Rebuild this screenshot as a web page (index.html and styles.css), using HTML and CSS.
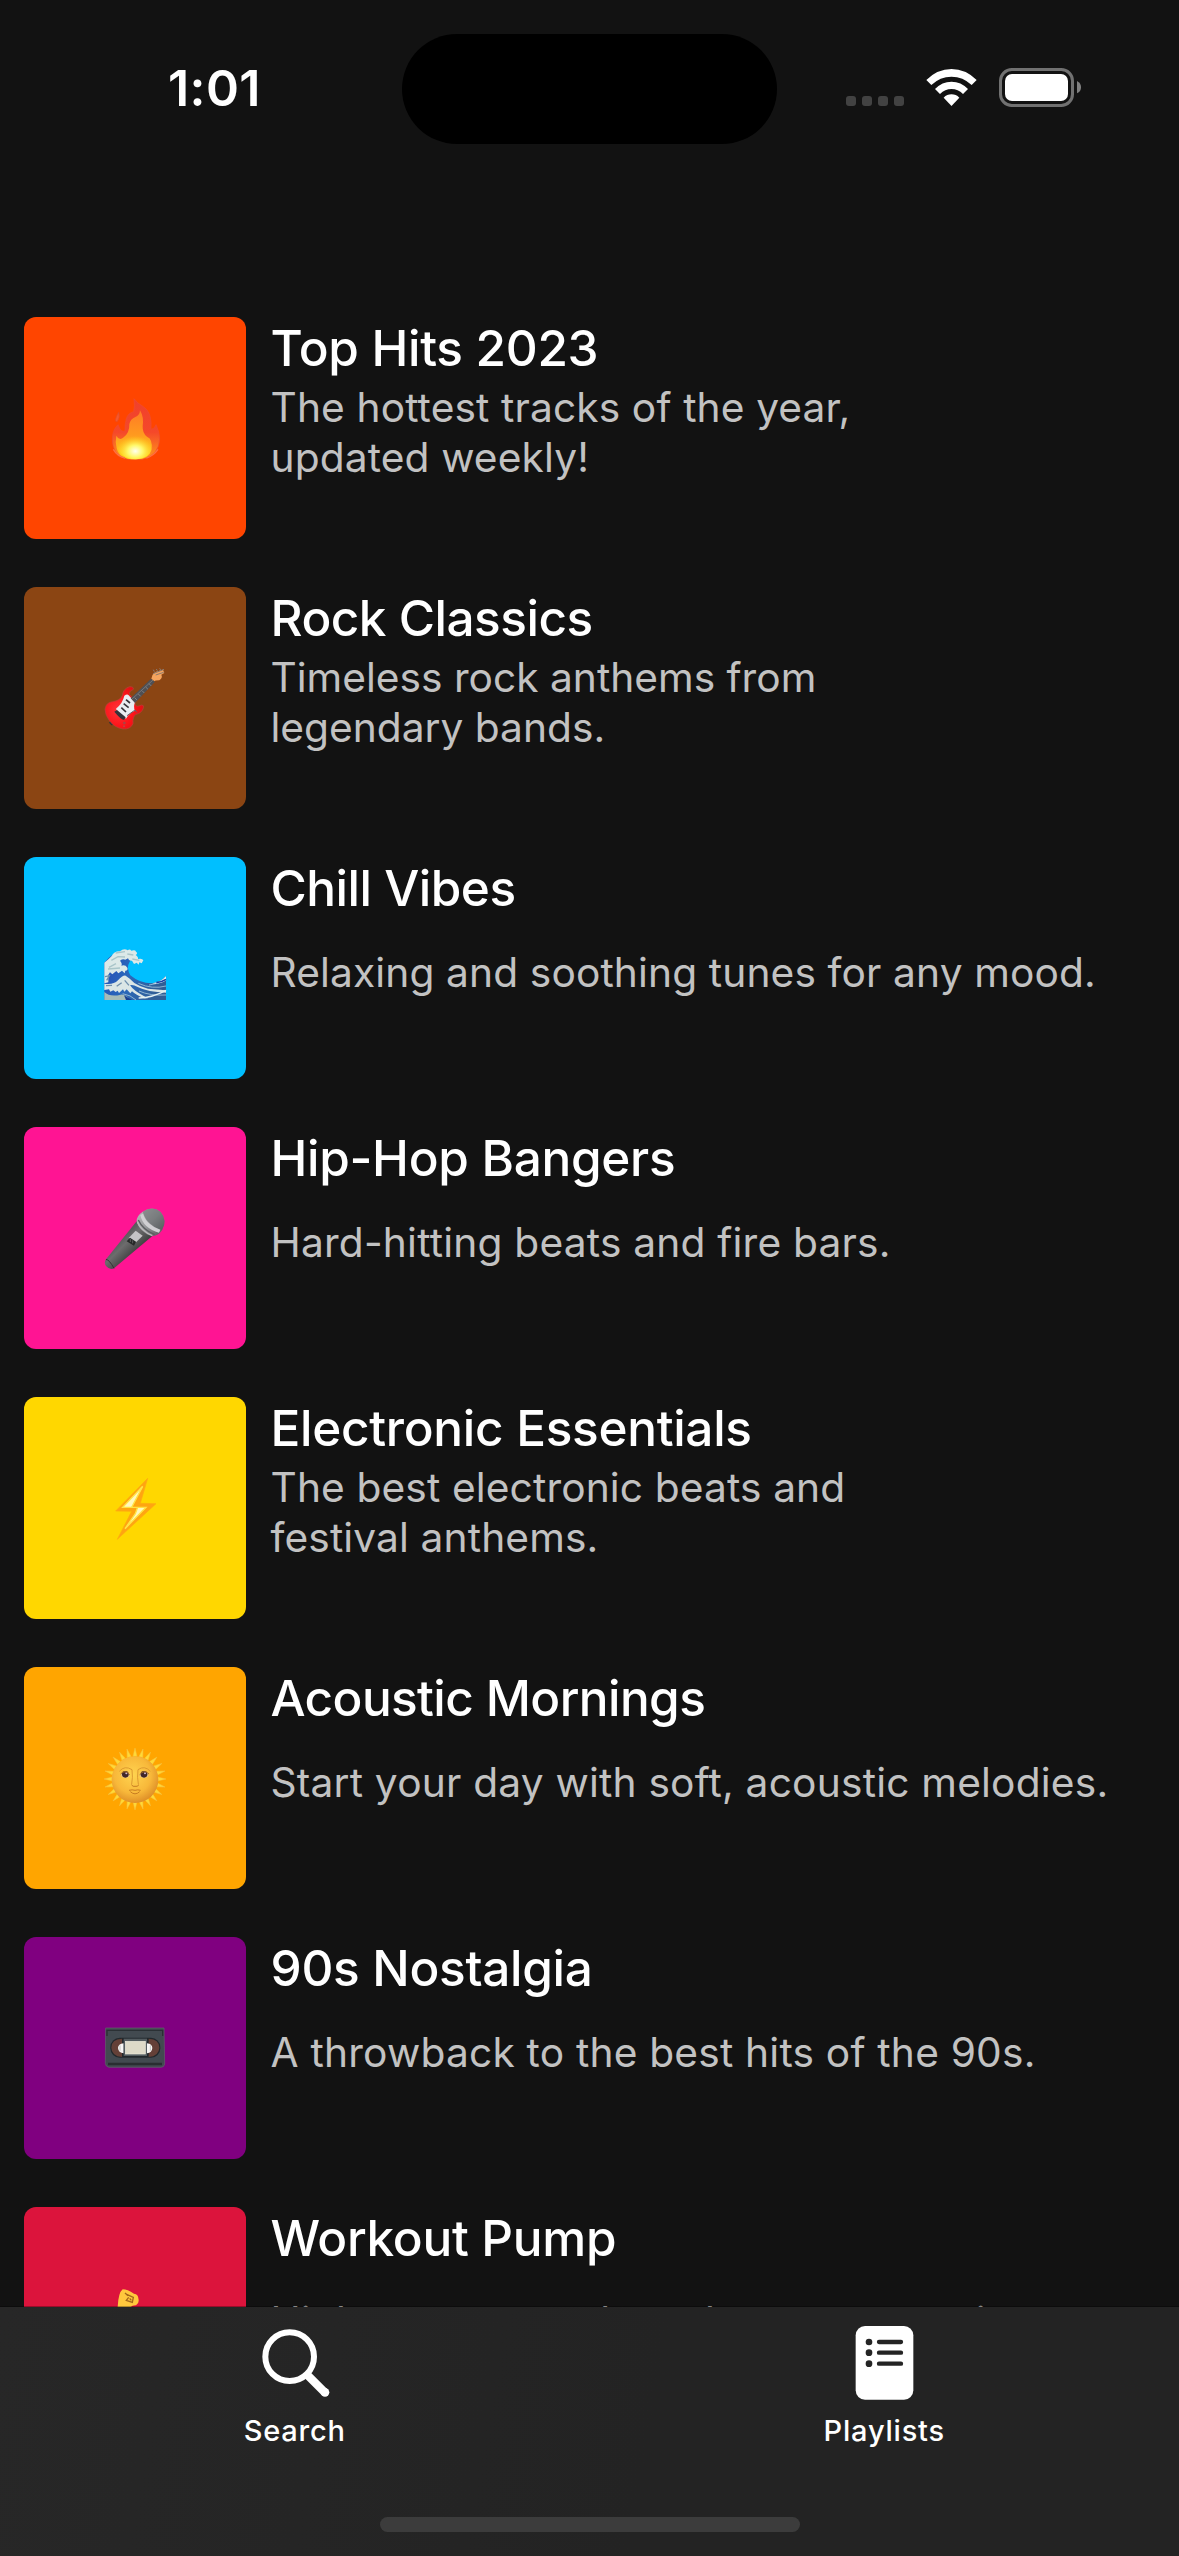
FILE: index.html
```html
<!DOCTYPE html>
<html lang="en">
<head>
<meta charset="utf-8">
<title>Playlists</title>
<link rel="stylesheet" href="styles.css">
</head>
<body>
<div class="screen">
  <header class="status-bar">
    <div class="time">1:01</div>
    <div class="island"></div>
    <svg class="status-icons" viewBox="0 0 810 240" aria-hidden="true">
      <g fill="#424242"><rect x="48" y="138" width="30" height="30" rx="9"/><rect x="96" y="138" width="30" height="30" rx="9"/><rect x="144" y="138" width="30" height="30" rx="9"/><rect x="192" y="138" width="30" height="30" rx="9"/></g>
      <g fill="#fff">
        <path d="M289 90Q322 57 364.500 57Q407 57 440 90L425 105Q399 80 364.500 80Q330 80 304 105Z"/>
        <path d="M315 117Q336 95 364.500 95Q393 95 414 117L399 132Q384 117 364.500 117Q345 117 330 132Z"/>
        <path d="M341 143Q351 133 364.500 133Q378 133 388 143L364.500 168Z"/>
        <rect x="525" y="72" width="189" height="81" rx="21"/>
      </g>
      <rect x="511.500" y="58.500" width="216" height="108" rx="34" fill="none" stroke="#717171" stroke-width="9"/>
      <path d="M741 93Q753 99 753 111.500Q753 124 741 130Z" fill="#808080"/>
    </svg>
  </header>

  <main class="playlists">
    <article class="playlist">
      <div class="cover cover-fire">
        <svg viewBox="-15 -6 300 300" aria-hidden="true">
          <defs>
            <linearGradient id="flame" x1="0" y1="0" x2="0" y2="1"><stop offset="0" stop-color="#f0402c"/><stop offset=".55" stop-color="#f5482a"/><stop offset="1" stop-color="#ff9c1c"/></linearGradient>
            <linearGradient id="flameMid" x1="0" y1="0" x2="0" y2="1"><stop offset="0" stop-color="#ff7a25"/><stop offset=".5" stop-color="#ff9a1f"/><stop offset="1" stop-color="#ffd91a"/></linearGradient>
            <radialGradient id="flameCore" cx=".5" cy=".7" r=".55"><stop offset="0" stop-color="#fffff0"/><stop offset=".4" stop-color="#fff86a"/><stop offset="1" stop-color="#ffd61a" stop-opacity="0"/></radialGradient>
          </defs>
          <path d="M132 56Q135 79 131 95Q114 99 109 116Q104 134 105 153Q92 158 84 134Q66 151 67 180Q68 222 103 235Q120 241 158 238Q207 225 209 177Q209 157 198 134Q194 147 183 148Q187 97 160 80Q141 69 132 56Z" fill="url(#flame)" stroke="#ef4d32" stroke-width="2"/>
          <path d="M86 97Q91 113 82 124Q75 127 77 117Q79 108 86 97Z" fill="#f9582c" stroke="#e0502c" stroke-width="2"/>
          <path d="M150 91Q162 111 158 138Q157 160 171 170Q190 178 184 210Q178 237 138 238Q88 239 80 204Q75 184 79 167Q88 184 101 172Q119 158 118 132Q121 117 136 111Q149 107 150 91Z" fill="url(#flameMid)"/>
          <ellipse cx="136" cy="197" rx="52" ry="41" fill="url(#flameCore)"/>
          <path d="M70 208Q82 229 105 234M204 208Q190 228 169 234" fill="none" stroke="#ff7140" stroke-width="4"/>
        </svg>
      </div>
      <div class="info"><h2 class="name loose">Top Hits 2023</h2><p class="about open">The hottest tracks of the year,<br>updated weekly!</p></div>
    </article>

    <article class="playlist">
      <div class="cover cover-rock">
        <svg viewBox="-15 -6 300 300" aria-hidden="true">
          <defs><radialGradient id="guitarBody" cx=".35" cy=".55" r=".65"><stop offset="0" stop-color="#ff363b"/><stop offset=".6" stop-color="#fc1419"/><stop offset="1" stop-color="#df1013"/></radialGradient></defs>
          <path d="M59 216L68 224" stroke="#32333c" stroke-width="7"/>
          <path d="M45 178Q47 158 67 155Q91 152 97 136Q99 116 119 110Q132 110 130 118Q116 124 118 133L137 154Q130 163 141 169Q150 167 155 165Q163 165 160 174Q155 190 138 193Q127 201 129 221Q121 239 99 237Q74 233 59 213Q45 195 45 178Z" fill="url(#guitarBody)" stroke="#b8433a" stroke-width="2"/>
          <path d="M116 136L135 157Q129 170 135 182Q118 188 108 206L83 186L78 176Q98 160 103 137Q112 130 116 136Z" fill="#e9edf1"/>
          <path d="M122 145L183 86L195 95L135 159Z" fill="#505054"/>
          <path d="M134 143L141 150M145 132L152 139M156 122L163 129M167 111L174 118M177 101L184 108" stroke="#999" stroke-width="2"/>
          <path d="M126 147L189 90" stroke="#88888a" stroke-width="2"/>
          <path d="M108 149L120 159M101 161L116 173M94 173L108 186" stroke="#343338" stroke-width="5"/>
          <path d="M73 185L81 180L107 202L102 210Q91 207 73 185Z" fill="#34343a"/>
          <path d="M111 197L135 180L140 187" fill="none" stroke="#665f68" stroke-width="3"/>
          <circle cx="103" cy="219" r="4" fill="#a44"/><circle cx="102" cy="229" r="3" fill="#b44"/>
          <path d="M184 86Q187 72 196 66L219 59L223 69L214 74Q219 83 208 91Q195 91 194 94Z" fill="#f5a45e"/>
          <path d="M189 71L222 58M193 65L190 59M202 62L199 57M212 60L209 55M197 75L221 67" stroke="#8b7a70" stroke-width="3"/>
        </svg>
      </div>
      <div class="info"><h2 class="name">Rock Classics</h2><p class="about">Timeless rock anthems from<br>legendary bands.</p></div>
    </article>

    <article class="playlist">
      <div class="cover cover-chill">
        <svg viewBox="-15 -36 300 300" aria-hidden="true">
          <defs><linearGradient id="sea" x1="0" y1="0" x2="1" y2=".3"><stop offset="0" stop-color="#244bb6"/><stop offset=".5" stop-color="#2a68bb"/><stop offset="1" stop-color="#315f96"/></linearGradient></defs>
          <path d="M43 98Q64 69 104 59L138 69L119 95Q108 112 121 136Q149 160 185 160Q213 157 228 137V210H43Z" fill="url(#sea)"/>
          <path d="M43 98Q57 87 65 78Q72 63 90 64Q102 54 113 61Q119 55 124 62Q136 58 138 65Q145 69 137 75Q146 82 144 87Q157 84 160 91L155 100L148 97L146 104L140 98L132 102L126 92Q116 94 114 85L106 89Q98 86 90 92Q98 101 94 107Q106 103 112 113Q115 121 106 122L104 130L96 122L85 130L79 123L67 133L60 127L55 134L55 157L43 160Z" fill="#dce9e8"/>
          <path d="M64 91L84 80L105 81M57 112L78 101M77 69L105 65M112 72L130 75M127 87L148 91M54 117L90 114" fill="none" stroke="#a9c5c9" stroke-width="4"/>
          <path d="M43 161Q69 166 84 151Q98 135 107 137Q121 146 133 159Q151 171 174 176L228 181V188Q173 186 143 171Q127 162 120 166Q132 183 160 197L174 205H162Q137 195 126 184L121 190L110 178L103 185L99 178L87 189L83 182L77 186L70 181L61 185L57 178L43 180Z" fill="#dbe6e6"/>
          <path d="M43 186Q60 202 92 194Q104 191 121 210H43Z" fill="#a6bbb8"/>
          <path d="M98 191Q122 195 138 210M145 160Q187 179 228 168M177 165Q207 161 228 150M147 183Q180 198 228 195" fill="none" stroke="#8fb5d3" stroke-width="3"/>
          <path d="M186 160Q211 158 228 138V151Q211 164 186 160Z" fill="#e4eff3"/><path d="M199 158Q214 157 228 148" fill="none" stroke="#173ea0" stroke-width="5"/>
          <path d="M146 204Q188 203 228 181" fill="none" stroke="#e4f1f2" stroke-width="4"/>
          <path d="M45 140L58 137L50 151M48 167L66 166M80 169L95 158M104 151L117 166" fill="none" stroke="#6e8fad" stroke-width="4"/>
          <path d="M102 196L126 210H108Z" fill="#173e92"/>
        </svg>
      </div>
      <div class="info"><h2 class="name">Chill Vibes</h2><p class="about open">Relaxing and soothing tunes for any mood.</p></div>
    </article>

    <article class="playlist">
      <div class="cover cover-hiphop">
        <svg viewBox="-15 -6 300 300" aria-hidden="true">
          <defs>
            <linearGradient id="micBody" x1="0" y1="0" x2="1" y2="1"><stop offset=".2" stop-color="#3b4141"/><stop offset=".45" stop-color="#6d6c6d"/><stop offset=".7" stop-color="#343535"/></linearGradient>
            <linearGradient id="micHead" x1="0" y1="0" x2="1" y2="1"><stop offset="0" stop-color="#c1bfc1"/><stop offset=".5" stop-color="#96979a"/><stop offset="1" stop-color="#4d4e51"/></linearGradient>
            <pattern id="mesh" width="6" height="6" patternUnits="userSpaceOnUse" patternTransform="rotate(20)"><path d="M0 3H6M3 0V6" stroke="#535b5d" stroke-width="1.500"/></pattern>
          </defs>
          <path d="M140 94L188 137L72 235Q59 241 48 228Q41 219 48 208Z" fill="url(#micBody)"/>
          <path d="M48 208Q58 209 72 235" fill="none" stroke="#333" stroke-width="3"/>
          <path d="M140 94Q139 78 158 65Q188 46 212 66Q233 91 216 121Q204 139 187 138Q170 136 156 121Q142 107 140 94Z" fill="url(#micHead)"/>
          <path d="M158 65Q188 46 212 66Q233 91 216 121Q197 115 181 101Q165 88 158 65Z" fill="url(#mesh)"/>
          <path d="M151 75L159 71Q166 91 180 102Q193 114 211 119L207 128Q184 122 169 108Q155 95 151 75Z" fill="#d0cfd2"/>
          <path d="M145 90Q158 119 194 134" fill="none" stroke="#5c5d60" stroke-width="4"/>
          <path d="M142 96Q154 123 187 137" fill="none" stroke="#bbb9bb" stroke-width="4"/>
          <path d="M137 122L158 137L138 157L116 144Z" fill="#c5c4c6"/><path d="M120 143L138 155L132 167L110 154Z" fill="#262828"/>
          <path d="M121 147V156M128 151V160" stroke="#777" stroke-width="2"/>
        </svg>
      </div>
      <div class="info"><h2 class="name loose">Hip-Hop Bangers</h2><p class="about airy">Hard-hitting beats and fire bars.</p></div>
    </article>

    <article class="playlist">
      <div class="cover cover-electro">
        <svg viewBox="-15 -6 300 300" aria-hidden="true">
          <path d="M173 55L77 153L125 154L82 238L198 131L151 130Z" fill="#ffa511" stroke="#ffab10" stroke-width="2"/>
          <path d="M158 79L98 142H143L136 161L105 206L168 142H125Z" fill="#fff9c0" stroke="#ffe345" stroke-width="4"/>
        </svg>
      </div>
      <div class="info"><h2 class="name loose">Electronic Essentials</h2><p class="about open">The best electronic beats and<br>festival anthems.</p></div>
    </article>

    <article class="playlist">
      <div class="cover cover-acoustic">
        <svg viewBox="-15 -6 300 300" aria-hidden="true">
          <defs>
            <radialGradient id="sun" cx=".45" cy=".4" r=".6"><stop offset="0" stop-color="#ffd450"/><stop offset=".65" stop-color="#f8b83a"/><stop offset="1" stop-color="#df9028"/></radialGradient>
            <path id="ray" d="M129 79L135 54L141 79Z"/>
            <g id="rays"><use href="#ray"/><use href="#ray" transform="rotate(15 135 147)"/><use href="#ray" transform="rotate(30 135 147)"/><use href="#ray" transform="rotate(45 135 147)"/><use href="#ray" transform="rotate(60 135 147)"/><use href="#ray" transform="rotate(75 135 147)"/></g>
          </defs>
          <g fill="#ffda36" stroke="#f5bf42" stroke-width="1.500"><use href="#rays"/><use href="#rays" transform="rotate(90 135 147)"/><use href="#rays" transform="rotate(180 135 147)"/><use href="#rays" transform="rotate(270 135 147)"/></g>
          <circle cx="135" cy="149" r="70" fill="url(#sun)"/>
          <path d="M88 124Q104 105 126 119Q129 143 125 162M181 124Q164 105 144 119Q141 143 145 162" fill="none" stroke="#dd9a30" stroke-width="3"/>
          <ellipse cx="106" cy="134" rx="13" ry="9" fill="#e8c48a"/><ellipse cx="162" cy="134" rx="13" ry="9" fill="#e8c48a"/>
          <circle cx="106" cy="133" r="10" fill="#40262b"/><circle cx="162" cy="133" r="10" fill="#40262b"/>
          <circle cx="109" cy="130" r="3" fill="#d4b8cf"/><circle cx="165" cy="130" r="3" fill="#d4b8cf"/>
          <path d="M92 132Q105 117 119 134M149 134Q162 117 177 132" fill="none" stroke="#a56b26" stroke-width="3"/>
          <path d="M124 164Q129 171 135 169Q142 171 147 164M117 181Q127 178 135 181Q143 178 152 181M121 185Q135 198 149 185" fill="none" stroke="#c87c22" stroke-width="3"/>
        </svg>
      </div>
      <div class="info"><h2 class="name tight">Acoustic Mornings</h2><p class="about airy">Start your day with soft, acoustic melodies.</p></div>
    </article>

    <article class="playlist">
      <div class="cover cover-nostalgia">
        <svg viewBox="-15 -6 300 300" aria-hidden="true">
          <path d="M47 84H222L224 192Q222 202 213 202H57Q47 200 46 190Z" fill="#424a50" stroke="#60636b" stroke-width="2"/>
          <path d="M51 108V91H218V108" fill="none" stroke="#2a3034" stroke-width="4"/>
          <path d="M54 192H216" stroke="#292e31" stroke-width="7"/>
          <rect x="61" y="113" width="150" height="60" rx="28" fill="#22282c"/>
          <path d="M96 116Q64 118 64 143Q65 168 96 171ZM176 116Q208 118 208 143Q207 168 176 171Z" fill="#644037"/>
          <path d="M101 130Q84 132 84 144Q85 158 101 160ZM171 130Q187 132 187 144Q186 158 171 160Z" fill="#f6f5f4"/>
          <path d="M90 136V152M181 136V152" stroke="#aaa" stroke-width="2"/>
          <rect x="101" y="116" width="70" height="52" fill="#535c60"/>
          <rect x="106" y="124" width="60" height="38" fill="#dddac8" stroke="#eeeadb" stroke-width="2"/>
        </svg>
      </div>
      <div class="info"><h2 class="name loose">90s Nostalgia</h2><p class="about airy">A throwback to the best hits of the 90s.</p></div>
    </article>

    <article class="playlist">
      <div class="cover cover-workout">
        <svg viewBox="-15 -6 300 300" aria-hidden="true">
          <path d="M83 111Q85 68 98 58Q112 58 132 71Q145 73 145 85Q149 100 138 106Q120 105 119 120L129 150Q171 118 207 158Q223 188 216 230Q140 244 70 219Q54 206 70 160Z" fill="#ffc83d"/>
          <path d="M110 73L130 82L127 97L109 91L116 82M119 85L124 91M105 69L114 77" fill="none" stroke="#a46619" stroke-width="4"/>
        </svg>
      </div>
      <div class="info"><h2 class="name loose">Workout Pump</h2><p class="about open raised">High-energy tracks to keep you moving.</p></div>
    </article>
  </main>

  <nav class="tab-bar">
    <div class="tabs">
      <a class="tab">
        <svg class="tab-icon" viewBox="0 0 240 240" aria-hidden="true">
          <circle cx="104" cy="101" r="73" fill="none" stroke="#fff" stroke-width="18"/>
          <path d="M156 155L210 209" stroke="#fff" stroke-width="25"/><circle cx="210" cy="208" r="13" fill="#fff"/>
        </svg>
        <span class="label">Search</span>
      </a>
      <a class="tab">
        <svg class="tab-icon" viewBox="0 0 240 240" aria-hidden="true">
          <rect x="35" y="9" width="173" height="221" rx="28" fill="#fff"/>
          <g fill="#242424"><circle cx="75" cy="57" r="10"/><circle cx="75" cy="89" r="10"/><circle cx="75" cy="122" r="10"/></g>
          <path d="M105 57H171M105 89H171M105 122H171" stroke="#242424" stroke-width="13" stroke-linecap="round"/>
        </svg>
        <span class="label">Playlists</span>
      </a>
    </div>
    <div class="home-indicator"></div>
  </nav>
</div>
</body>
</html>
```
FILE: styles.css
```css
* { box-sizing: border-box; }

body {
  margin: 0;
  background: #121212;
  color: #fff;
  font-family: Inter, "Liberation Sans", sans-serif;
}

.screen {
  display: flex;
  flex-direction: column;
  width: 1179px;
  height: 2556px;
  overflow: hidden;
  background: #121212;
}

/* Status bar */
.status-bar {
  display: grid;
  grid-template-columns: 402px 375px 402px;
  align-items: start;
  flex: 0 0 317px;
  padding-top: 34px;
}

.time {
  padding: 23px 0 0 168px;
  font-size: 50px;
  font-weight: 600;
  line-height: 62px;
  letter-spacing: 0.4px;
}

.island {
  height: 110px;
  border-radius: 55px;
  background: #000;
}

.status-icons {
  width: 270px;
  height: 80px;
  margin: 16px 0 0 53px;
}

/* Playlist list */
.playlists {
  display: flex;
  flex-direction: column;
  flex: 0 0 1990px;
  gap: 48px;
  overflow: hidden;
  padding-left: 24px;
}

.playlist {
  display: flex;
  flex: 0 0 222px;
  gap: 24.5px;
}

.cover {
  display: flex;
  align-items: center;
  justify-content: center;
  width: 222px;
  height: 222px;
  border-radius: 12px;
}

.cover svg { width: 100px; height: 100px; }

.cover-fire { background: #ff4500; }
.cover-rock { background: #8b4513; }
.cover-chill { background: #00bfff; }
.cover-hiphop { background: #ff1493; }
.cover-electro { background: #ffd700; }
.cover-acoustic { background: #ffa500; }
.cover-nostalgia { background: #800080; }
.cover-workout { background: #dc143c; }

.info {
  display: flex;
  flex-direction: column;
  gap: 4px;
}

.name {
  margin: 0;
  font-size: 49.5px;
  font-weight: 500;
  line-height: 62px;
  letter-spacing: -0.5px;
  white-space: nowrap;
}

.name.loose { letter-spacing: -0.3px; }
.name.tight { letter-spacing: -0.6px; }

.about {
  display: flex;
  flex-direction: column;
  justify-content: center;
  height: 100px;
  margin: 0;
  color: #c2c2c2;
  font-size: 40.7px;
  line-height: 50px;
  white-space: nowrap;
}

.about.open { letter-spacing: 0.12px; }
.about.airy { letter-spacing: 0.2px; }
.about.raised { padding-bottom: 3px; }

/* Tab bar */
.tab-bar {
  position: relative;
  display: flex;
  flex-direction: column;
  flex: 0 0 250px;
  align-items: center;
  margin-top: -1px;
  border-top: 1px solid rgba(0, 0, 0, 0.3);
  background: linear-gradient(100deg, #272727, #232323 55%, #232323) padding-box;
}

.tabs {
  display: grid;
  grid-template-columns: 1fr 1fr;
  width: 100%;
  height: 210px;
}

.tab {
  display: flex;
  flex-direction: column;
  align-items: center;
  padding-top: 16px;
}

.tab-icon { width: 80px; height: 80px; }

.label {
  margin-top: 10px;
  font-size: 29px;
  font-weight: 500;
  line-height: 36px;
  letter-spacing: 0.8px;
}

.home-indicator {
  width: 420px;
  height: 15px;
  border-radius: 8px;
  background: #3c3c3c;
}
```
